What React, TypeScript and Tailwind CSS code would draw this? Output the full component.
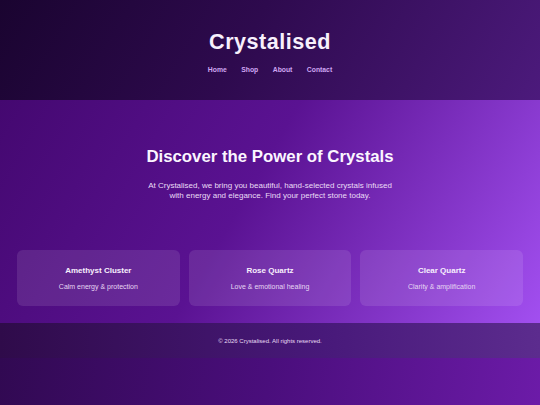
export default function App() {
  const cards = [
    { t: "Amethyst Cluster", d: "Calm energy & protection" },
    { t: "Rose Quartz", d: "Love & emotional healing" },
    { t: "Clear Quartz", d: "Clarity & amplification" },
  ];
  return (
    <div
      className="min-h-[405px] w-[540px] flex flex-col bg-[linear-gradient(100deg,#2b0848,#4a0e7c_55%,#6c1ba8)] text-white"
      style={{ fontFamily: '"Liberation Sans", Arial, sans-serif' }}
    >
      <header className="h-[100px] flex flex-col items-center bg-[linear-gradient(120deg,#1a0430,#2e0a4e_45%,#4c1a7c)]">
        <h1 className="mt-[29px] text-[21.6px] leading-[25px] font-bold tracking-[0.5px] text-[#f7f0fc]">
          Crystalised
        </h1>
        <nav className="mt-[12px] flex gap-[14.5px] text-[6.8px] leading-[8px] font-bold text-[#cfa6f2]">
          <span>Home</span>
          <span>Shop</span>
          <span>About</span>
          <span>Contact</span>
        </nav>
      </header>
      <main className="h-[223px] flex flex-col items-center bg-[linear-gradient(120deg,#440870,#5a1292_45%,#a24ff0)]">
        <h2 className="mt-[47px] text-[16.8px] leading-[19px] font-bold text-[#fbf6ff]">
          Discover the Power of Crystals
        </h2>
        <p className="mt-[14.5px] max-w-[252px] text-center text-[8px] leading-[10px] text-[#eadcf6]">
          At Crystalised, we bring you beautiful, hand-selected crystals infused with energy and elegance. Find your perfect stone today.
        </p>
        <div className="mt-[49.5px] w-full px-[17px] grid grid-cols-3 gap-[9px]">
          {cards.map((c) => (
            <div
              key={c.t}
              className="h-[56px] rounded-[6px] bg-white/10 flex flex-col items-center pt-[15.5px]"
            >
              <div className="text-[8px] leading-[9px] font-bold text-[#f8effd]">{c.t}</div>
              <div className="mt-[8px] text-[7px] leading-[8px] text-[#e6d6f3]">{c.d}</div>
            </div>
          ))}
        </div>
      </main>
      <footer className="h-[35px] flex items-center justify-center bg-[linear-gradient(90deg,#2f0b4a,#48197a_60%,#5c2c8e)]">
        <span className="mt-[1px] text-[6px] leading-[7px] text-[#e8daf4]">
          © 2026 Crystalised. All rights reserved.
        </span>
      </footer>
    </div>
  );
}
